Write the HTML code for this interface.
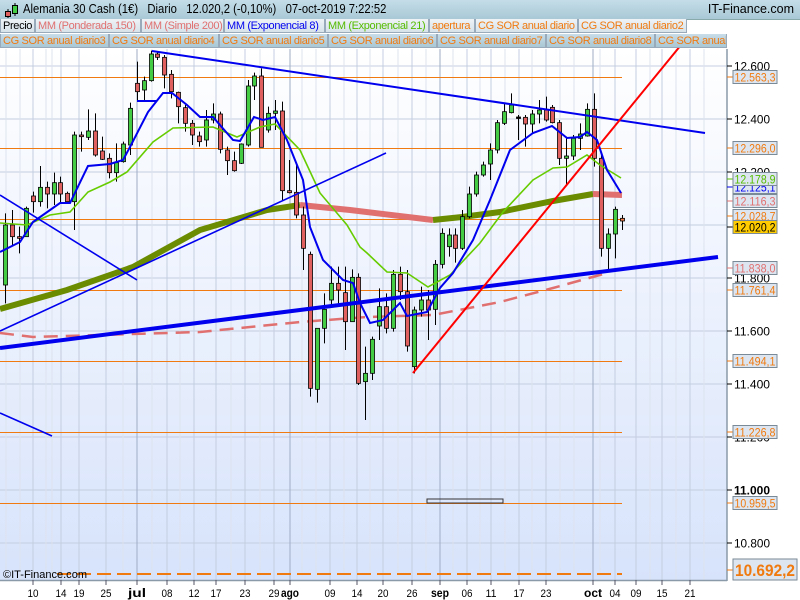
<!DOCTYPE html>
<html><head><meta charset="utf-8"><style>
html,body{margin:0;padding:0;width:800px;height:600px;overflow:hidden;background:#fff;font-family:"Liberation Sans",sans-serif}
#hdr{position:absolute;left:0;top:0;width:800px;height:19px;background:linear-gradient(#c4dde8,#a9c8d6);border-bottom:1px solid #8aa}
#hdr .t{position:absolute;left:23px;top:2px;font-size:12.5px;color:#000;white-space:pre;transform:scaleX(0.9);transform-origin:0 0}
#hdr .r{position:absolute;right:6px;top:2px;font-size:12.5px;color:#000}
.row{position:absolute;left:0;height:15px;font-size:11px;letter-spacing:-0.35px;white-space:nowrap}
.row span{position:absolute;top:0;height:14px;line-height:14px;border:1px solid #9ab;border-top:none;padding-left:2px;box-sizing:border-box;overflow:hidden}
#r1{top:19px}#r1 span{background:linear-gradient(#eef3f6,#d7e3ea)}
#r2{top:34px}#r2 span{background:linear-gradient(#c8dde8,#a9c7d5);color:#f07a10}
svg{position:absolute;left:0;top:0}
</style></head><body>
<svg id="s" width="800" height="600" xmlns="http://www.w3.org/2000/svg">
<defs><linearGradient id="bg" x1="0" y1="0" x2="0" y2="1"><stop offset="0" stop-color="#ffffff"/><stop offset="1" stop-color="#d7e3fb"/></linearGradient></defs>
<rect x="0" y="49" width="727" height="531" fill="url(#bg)"/>
<g id="grid"></g>
<g id="hl"></g>
<polyline fill="none" stroke="#e07070" stroke-width="2.5" stroke-dasharray="14,8" points="0,333 33,337 100,335 200,332 300,322 367,317 433,315 500,302 553,288 607,273"/>
<polyline fill="none" stroke="#6b8c00" stroke-width="6" points="0,309 67,290 133,267 200,230 267,210 300,205"/>
<polyline fill="none" stroke="#e07070" stroke-width="6" points="300,205 350,210 433,220"/>
<polyline fill="none" stroke="#6b8c00" stroke-width="6" points="433,220 462,217 500,212 553,201 593,194"/>
<polyline fill="none" stroke="#e07070" stroke-width="6" points="593,194 622,195"/>
<g id="cd"></g>
<polyline fill="none" stroke="#66cc00" stroke-width="1.6" points="0,223 27,225 50,215 70,212 88,192 110,182 127,172 153,142 173,128 213,127 237,137 260,127 275,124 300,150 320,193 347,225 360,247 367,253 387,272 407,273 428,287 450,275 480,243 503,212 533,180 553,168 567,167 587,155 600,165 621,178"/>
<polyline fill="none" stroke="#0000ee" stroke-width="2" points="0,252 20,242 33,222 60,203 70,203 88,166 110,164 123,160 130,147 148,112 163,93 172,93 187,105 200,117 213,117 233,140 240,141 254,117 263,120 275,117 287,140 303,180 310,227 323,260 343,280 353,283 360,303 370,323 383,320 400,303 407,316 427,312 440,288 453,273 473,240 490,200 510,150 533,133 552,126 567,138 580,137 587,132 597,140 607,170 621,193"/>
<line x1="137" y1="101" x2="157" y2="101" stroke="#0000ee" stroke-width="2"/>
<line x1="152" y1="51" x2="705" y2="133" stroke="#0000ee" stroke-width="2"/>
<line x1="0" y1="195" x2="137" y2="280" stroke="#0000ee" stroke-width="1.6"/>
<line x1="0" y1="331" x2="386" y2="153" stroke="#0000ee" stroke-width="1.6"/>
<line x1="0" y1="348" x2="718" y2="257" stroke="#0000ee" stroke-width="4"/>
<line x1="0" y1="413" x2="52" y2="436" stroke="#0000ee" stroke-width="1.6"/>
<line x1="413" y1="373" x2="681" y2="45" stroke="#ff0000" stroke-width="2"/>
<rect x="427" y="499" width="76" height="4" fill="none" stroke="#333" stroke-width="1"/>
<line x1="727" y1="49" x2="727" y2="581" stroke="#8a9aa8" stroke-width="1.5"/>
<line x1="0" y1="580.5" x2="727" y2="580.5" stroke="#8a9aa8" stroke-width="1.5"/>
<g id="ax" font-family="Liberation Sans, sans-serif"></g>
<text x="3" y="578" font-size="11" fill="#000" font-family="Liberation Sans, sans-serif" textLength="84" lengthAdjust="spacingAndGlyphs">©IT-Finance.com</text>
</svg>
<div id="hdr"><svg width="20" height="19" style="position:absolute;left:2px;top:1px"><line x1="6" y1="8" x2="6" y2="17" stroke="#000"/><rect x="3.5" y="10.5" width="5" height="5" fill="#e06060" stroke="#000"/><line x1="13" y1="2" x2="13" y2="15" stroke="#000"/><rect x="10.5" y="4.5" width="5" height="8" fill="#44cc44" stroke="#000"/></svg>
<div class="t">Alemania 30 Cash (1€)   Diario   12.020,2 (-0,10%)   07-oct-2019 7:22:52</div><div class="r">IT-Finance.com</div></div>
<div class="row" id="r1">
<span style="left:0;width:35px;color:#000">Precio</span>
<span style="left:35px;width:106px;color:#e07070">MM (Ponderada 150)</span>
<span style="left:141px;width:83px;color:#e07070">MM (Simple 200)</span>
<span style="left:224px;width:101px;color:#0000ee">MM (Exponencial 8)</span>
<span style="left:325px;width:104px;color:#55bb00">MM (Exponencial 21)</span>
<span style="left:429px;width:46px;color:#f07a10">apertura</span>
<span style="left:475px;width:103px;color:#f07a10">CG SOR anual diario</span>
<span style="left:578px;width:109px;color:#f07a10">CG SOR anual diario2</span>
</div>
<div class="row" id="r2">
<span style="left:0;width:109px">CG SOR anual diario3</span>
<span style="left:109px;width:110px">CG SOR anual diario4</span>
<span style="left:219px;width:109px">CG SOR anual diario5</span>
<span style="left:328px;width:109px">CG SOR anual diario6</span>
<span style="left:437px;width:109px">CG SOR anual diario7</span>
<span style="left:546px;width:109px">CG SOR anual diario8</span>
<span style="left:655px;width:72px">CG SOR anual</span>
</div>
<script>
var NS="http://www.w3.org/2000/svg";
function el(p,t,a,txt){var e=document.createElementNS(NS,t);for(var k in a)e.setAttribute(k,a[k]);if(txt!=null)e.textContent=txt;document.getElementById(p).appendChild(e);return e;}
function Y(p){return 66+(12600-p)*0.265;}
[12600,12400,12200,12000,11800,11600,11400,11200,11000,10800].forEach(function(p){el("grid","line",{x1:0,x2:727,y1:Y(p),y2:Y(p),stroke:"#c4cee0","stroke-width":1});});
var dates=[[33,"10"],[61,"14"],[79,"19"],[106,"25"],[137,"jul",1],[167,"08"],[194,"12"],[216,"17"],[245,"23"],[274,"29"],[290,"ago",1],[330,"09"],[357,"14"],[383,"20"],[412,"26"],[440,"sep",1],[467,"06"],[491,"11"],[519,"17"],[546,"23"],[593,"oct",1],[615,"04"],[636,"09"],[662,"15"],[690,"21"]];
var extra=[6,20,46,52,123,152,180,231,260,302,316,344,370,398,426,453,480,505,532,560,574,600,650,676,704];
extra.forEach(function(x){el("grid","line",{x1:x,x2:x,y1:49,y2:580,stroke:"#dde3ee","stroke-width":1});});
dates.forEach(function(d){el("grid","line",{x1:d[0],x2:d[0],y1:49,y2:580,stroke:d[2]?"#9fadc6":"#c4cee0","stroke-width":1});
el("ax","line",{x1:d[0],x2:d[0],y1:580,y2:585,stroke:"#556"});
var a={x:d[0],y:597,"font-size":d[2]?12:11,"font-weight":d[2]?"bold":"normal","text-anchor":"middle",fill:"#000",textLength:d[2]?18:11,lengthAdjust:"spacingAndGlyphs"};
el("ax","text",a,d[1]);});
[77,148,219,290,361,432,503].forEach(function(y){el("hl","line",{x1:0,x2:622,y1:y+0.5,y2:y+0.5,stroke:"#f07a10","stroke-width":1});});
el("hl","line",{x1:57,x2:622,y1:574,y2:574,stroke:"#f07a10","stroke-width":2,"stroke-dasharray":"14,6"});
var c5=[[520,790,555,735,"g"],[510,615,555,590,"r"],[560,640,590,595,"r"],[500,590,505,590,"g"],[455,518,468,485,"r"],[378,500,442,485,"g"],[425,505,442,462,"r"],[398,495,428,462,"g"],[410,490,428,462,"r"],[455,490,460,485,"r"],[275,570,285,485,"g"],[275,335,285,290,"r"],[208,300,273,292,"g"],[220,350,273,345,"r"],[290,360,333,358,"r"],[340,415,355,398,"r"],[310,425,368,398,"g"],[305,368,312,365,"g"],[188,345,205,315,"g"],[65,180,130,155,"r"],[110,180,122,150,"g"],[32,125,42,122,"g"],[35,60,42,52,"r"],[45,145,52,105,"r"],[90,175,103,155,"r"],[155,250,157,200,"r"],[195,275,203,250,"r"],[240,315,250,285,"r"],[275,320,288,305,"r"],[210,320,240,300,"g"],[190,250,222,240,"g"],[215,340,222,328,"r"],[320,405,330,362,"r"],[335,395,362,392,"r"],[310,372,312,370,"g"],[120,320,138,315,"g"],[98,180,108,138,"g"],[85,322,108,322,"r"],[200,278,220,270,"g"],[180,270,213,220,"g"],[185,480,213,452,"r"],[360,460,452,458,"r"],[375,535,457,525,"r"],[500,690,525,625,"r"],[635,1070,643,1045,"r"],[865,1088,865,1048,"g"],[760,910,808,865,"g"],[680,800,730,780,"g"],[680,790,730,750,"r"],[680,930,758,845,"r"],[688,845,712,845,"g"],[700,1035,712,1030,"r"]];
var c6=[[920,1140,1000,1025,"g"],[890,1020,898,1000,"g"],[745,900,800,858,"g"],[760,880,800,865,"r"],[690,875,703,865,"g"],[680,780,703,755,"r"],[690,935,755,918,"r"],[800,1000,810,980,"g"],[740,830,780,810,"g"],[750,900,780,810,"r"],[660,855,673,808,"g"],[565,685,580,673,"g"],[565,650,585,620,"g"],[565,668,585,625,"r"],[510,630,530,625,"g"],[440,535,462,530,"g"],[395,470,405,462,"g"],[365,410,375,405,"g"],[310,420,330,372,"g"],[240,340,248,330,"g"],[190,255,215,250,"g"],[160,220,195,218,"g"],[225,300,231,234,"k"],[225,320,232,252,"r"],[210,280,222,252,"g"],[180,250,210,222,"g"],[170,245,210,240,"r"],[195,250,202,248,"r"],[240,375,248,355,"r"],[290,435,348,355,"g"],[285,360,295,348,"g"],[250,330,282,295,"g"],[190,290,208,288,"g"],[160,380,208,355,"r"],[340,650,355,625,"r"],[565,690,582,625,"g"],[500,655,508,582,"g"],[525,570,535,543,"o"]];
var all=c5.concat(c6);
var col={g:"#44cc44",r:"#e06060",k:"#000",o:"#f08050"};
all.forEach(function(c,i){var x=Math.round(5+i*6.93);
el("cd","line",{x1:x+0.5,x2:x+0.5,y1:40+c[0]/3,y2:40+c[1]/3,stroke:"#000","stroke-width":1});
var t=40+c[2]/3,b=40+c[3]/3;if(b-t<1.5)b=t+1.5;
el("cd","rect",{x:x-1.5,y:t,width:4,height:b-t,fill:col[c[4]],stroke:"#000","stroke-width":0.8});});
[[12600,"12.600"],[12400,"12.400"],[12200,"12.200"],[11800,"11.800"],[11600,"11.600"],[11400,"11.400"],[11200,"11.200"],[11000,"11.000",1],[10800,"10.800"]].forEach(function(a){var y=Y(a[0]);
el("ax","line",{x1:727,x2:732,y1:y,y2:y,stroke:"#000"});
el("ax","text",{x:734,y:y+4.5,"font-size":12,"font-weight":a[2]?"bold":"normal",fill:"#000",textLength:36,lengthAdjust:"spacingAndGlyphs"},a[1]);});
var labs=[[77,"12.563,3","#f07a10"],[148,"12.296,0","#f07a10"],[216,"12.028,7","#f07a10"],[187,"12.125,1","#0000ee"],[179,"12.178,9","#55bb00"],[201,"12.116,3","#e07070"],[227,"12.020,2","#000","#ffcc00"],[268,"11.838,0","#e07070"],[290,"11.761,4","#f07a10"],[361,"11.494,1","#f07a10"],[432,"11.226,8","#f07a10"],[503,"10.959,5","#f07a10"]];
labs.forEach(function(l){el("ax","line",{x1:727,x2:733,y1:l[0],y2:l[0],stroke:l[2]});
el("ax","rect",{x:733,y:l[0]-6.5,width:44,height:13,fill:l[3]||"#dde6f0",stroke:"#7a8a96","stroke-width":1});
el("ax","text",{x:734.5,y:l[0]+4.5,"font-size":12,fill:l[2],textLength:41,lengthAdjust:"spacingAndGlyphs"},l[1]);});
el("ax","line",{x1:727,x2:733,y1:570,y2:570,stroke:"#f07a10"});
el("ax","rect",{x:733,y:559,width:64,height:21,fill:"#dde6f0",stroke:"#7a8a96","stroke-width":1});
el("ax","text",{x:735,y:576,"font-size":16.5,"font-weight":"bold",fill:"#f07a10",textLength:60,lengthAdjust:"spacingAndGlyphs"},"10.692,2");
</script>
</body></html>
